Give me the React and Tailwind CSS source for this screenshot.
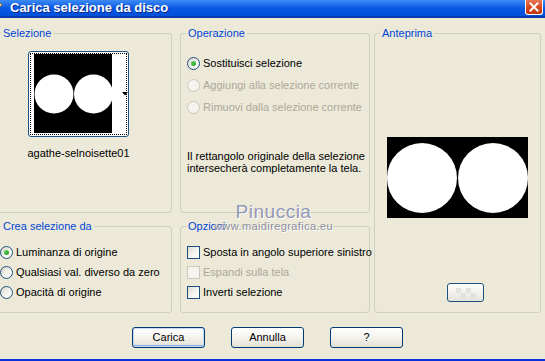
import React from "react";

const Radio = ({ checked = false, disabled = false }) => (
    <span
        className={`flex h-[13px] w-[13px] shrink-0 items-center justify-center rounded-full border ${
            disabled
                ? "border-[#CAC8BB] bg-[#F4F3EE]"
                : "border-[#1C5180] bg-linear-to-br from-[#D6D4C8] via-[#F2F1EB] to-white"
        }`}
    >
        {checked && <span className="h-[5px] w-[5px] rounded-full bg-linear-to-br from-[#5BD85A] to-[#1F9A1F]" />}
    </span>
);

const Checkbox = ({ disabled = false }) => (
    <span
        className={`block h-[13px] w-[13px] shrink-0 border ${
            disabled
                ? "border-[#CAC8BB] bg-[#F4F3EE]"
                : "border-[#1C5180] bg-linear-to-br from-[#DCDAD0] via-[#F4F3EE] to-white"
        }`}
    />
);

const Option = ({ control, disabled, children }) => (
    <label className={`flex h-[13px] items-center gap-[3px] leading-[13px] ${disabled ? "text-[#ACA899]" : "text-black"}`}>
        {control}
        <span className="whitespace-nowrap">{children}</span>
    </label>
);

const Group = ({ title, className = "", children }) => (
    <fieldset className={`min-w-0 rounded-[3px] border border-[#D0D0BF] ${className}`}>
        <legend className="ml-[5px] px-[2px] leading-[13px] text-[#0046D5]">{title}</legend>
        {children}
    </fieldset>
);

const Button = ({ children, isDefault = false }) => (
    <button
        className={`h-[21px] w-[73px] rounded-[3px] border border-[#003C74] bg-linear-to-b from-white via-[#F4F3EE] to-[#E2E0D4] leading-none text-black ${
            isDefault ? "shadow-[inset_0_0_0_1px_#C6D8F5,inset_0_-1px_0_1px_#8CB0E8]" : ""
        }`}
    >
        {children}
    </button>
);

const Circles = ({ w, h, r, cx1, cx2, cy }) => (
    <svg width={w} height={h} viewBox={`0 0 ${w} ${h}`} className="block shrink-0">
        <rect width={w} height={h} fill="#000" />
        <circle cx={cx1} cy={cy} r={r} fill="#fff" />
        <circle cx={cx2} cy={cy} r={r} fill="#fff" />
    </svg>
);

export default function App() {
    return (
        <div className="relative h-[361px] w-[545px] overflow-hidden border-b-2 border-[#0831D9] bg-[#ECE9D8] font-['Liberation_Sans',Arial,sans-serif] text-[11px]">
            {/* title bar */}
            <div className="flex h-[18px] items-start border-b-2 border-[#0A3CB0] bg-linear-to-b from-[#3D8BF5] via-[#0858E4] to-[#0250DA]">
                <svg width="14" height="14" viewBox="0 0 14 14" className="-ml-[11px] mt-[1px] shrink-0">
                    <path d="M2 12 L12 2 L13 4 L4 13 Z" fill="#E8D9A8" stroke="#7A6A40" strokeWidth="1" />
                </svg>
                <span className="ml-[7px] text-[13px] font-bold leading-[15px] text-white [text-shadow:1px_1px_0_#0A2A8A]">
                    Carica selezione da disco
                </span>
                <div className="ml-auto mr-[2px] flex h-[15px] w-[18px] items-center justify-center rounded-b-[3px] border border-t-0 border-white bg-linear-to-b from-[#E87655] via-[#D9471E] to-[#C13A14]">
                    <svg width="10" height="10" viewBox="0 0 10 10">
                        <path d="M1.5 1.5 L8.5 8.5 M8.5 1.5 L1.5 8.5" stroke="#fff" strokeWidth="2" strokeLinecap="square" />
                    </svg>
                </div>
            </div>

            {/* groups */}
            <div className="-ml-[5px] flex pt-[9px]">
                <div className="flex w-[177px] flex-col gap-[7px]">
                    <Group title="Selezione" className="h-[186px]">
                        <div className="box-content flex w-[101px] flex-col items-center pl-[32px] pt-[11px]">
                            <div className="relative h-[86px] w-[101px] shrink-0 rounded-[3px] border border-[#1C5180] bg-white p-[1px]">
                                <div className="flex h-full border border-dotted border-black pl-[3px]">
                                    <Circles w={78} h={79} r={19.5} cx1={20} cx2={59.5} cy={40} />
                                </div>
                                <svg width="6" height="4" viewBox="0 0 6 4" className="absolute left-[93px] top-[40px]">
                                    <path d="M0 0 H6 L3 3.5 Z" fill="#000" />
                                </svg>
                            </div>
                            <span className="mt-[10px] whitespace-nowrap leading-[13px]">agathe-selnoisette01</span>
                        </div>
                    </Group>
                    <Group title="Crea selezione da" className="h-[93px]">
                        <div className="flex flex-col gap-[7px] pl-[4px] pt-[13px]">
                            <Option control={<Radio checked />}>Luminanza di origine</Option>
                            <Option control={<Radio />}>Qualsiasi val. diverso da zero</Option>
                            <Option control={<Radio />}>Opacità di origine</Option>
                        </div>
                    </Group>
                </div>

                <div className="ml-[8px] flex w-[190px] flex-col gap-[7px]">
                    <Group title="Operazione" className="h-[186px]">
                        <div className="flex flex-col gap-[9px] pl-[6px] pt-[17px]">
                            <Option control={<Radio checked />}>Sostituisci selezione</Option>
                            <Option control={<Radio disabled />} disabled>Aggiungi alla selezione corrente</Option>
                            <Option control={<Radio disabled />} disabled>Rimuovi dalla selezione corrente</Option>
                        </div>
                        <p className="mt-[36px] pl-[6px] leading-[12px]">
                            Il rettangolo originale della selezione
                            <br />
                            intersecherà completamente la tela.
                        </p>
                    </Group>
                    <Group title="Opzioni" className="h-[93px]">
                        <div className="flex flex-col gap-[7px] pl-[6px] pt-[13px]">
                            <Option control={<Checkbox />}>Sposta in angolo superiore sinistro</Option>
                            <Option control={<Checkbox disabled />} disabled>Espandi sulla tela</Option>
                            <Option control={<Checkbox />}>Inverti selezione</Option>
                        </div>
                    </Group>
                </div>

                <Group title="Anteprima" className="ml-[4px] h-[286px] w-[167px]">
                    <div className="flex flex-col items-center pt-[97px]">
                        <Circles w={141} h={81} r={35} cx1={35} cx2={106} cy={41} />
                        <button className="ml-[16px] mt-[65px] flex h-[19px] w-[37px] items-center justify-center rounded-[3px] border border-[#1C5180] bg-linear-to-b from-white to-[#E6E4DA]">
                            <svg width="20" height="10" viewBox="0 0 20 10">
                                <rect x="0" y="0" width="5" height="5" fill="#E2E2E2" />
                                <rect x="10" y="0" width="5" height="5" fill="#E2E2E2" />
                                <rect x="5" y="5" width="5" height="5" fill="#E2E2E2" />
                                <rect x="15" y="5" width="5" height="5" fill="#E2E2E2" />
                            </svg>
                        </button>
                    </div>
                </Group>
            </div>

            {/* buttons */}
            <div className="mt-[14px] flex gap-[26px] pl-[132px]">
                <Button isDefault>Carica</Button>
                <Button>Annulla</Button>
                <Button>?</Button>
            </div>

            {/* watermark */}
            <div className="pointer-events-none absolute left-[214px] top-[202px] flex flex-col items-center">
                <span className="text-[19px] leading-[20px] tracking-[0.5px] text-[#9397B6] [text-shadow:1px_1px_0_#fff]">Pinuccia</span>
                <span className="-mt-[2px] text-[11px] leading-[13px] tracking-[0.4px] text-[#8E8E9C] [text-shadow:1px_1px_0_#fff]">
                    www.maidiregrafica.eu
                </span>
            </div>
        </div>
    );
}
